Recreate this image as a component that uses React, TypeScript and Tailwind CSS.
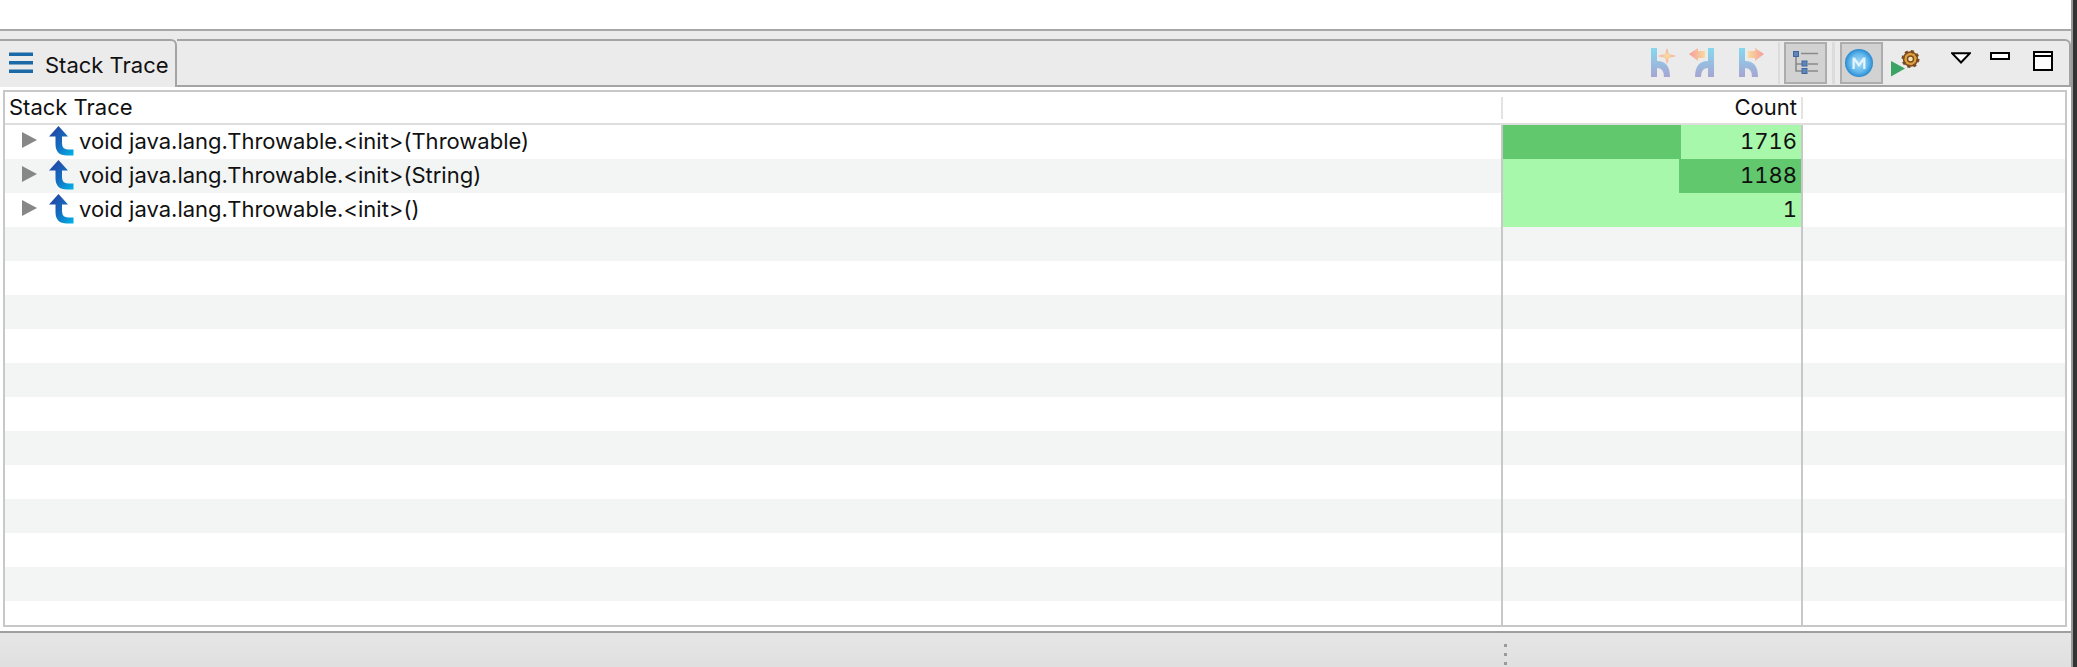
import React from "react";

type Row = {
  label: string;
  count: string;
  dark: "left" | "right" | "none";
};

const rows: Row[] = [
  { label: "void java.lang.Throwable.<init>(Throwable)", count: "1716", dark: "left" },
  { label: "void java.lang.Throwable.<init>(String)", count: "1188", dark: "right" },
  { label: "void java.lang.Throwable.<init>()", count: "1", dark: "none" },
];

const fontClass = "font-['Inter','Liberation_Sans',sans-serif]";

const SvgDefs = () => (
  <svg width="0" height="0" className="absolute">
    <defs>
      <linearGradient id="call" x1="0" y1="0" x2="1" y2="1">
        <stop offset="0" stopColor="#2b3a9c" />
        <stop offset="0.5" stopColor="#1668bd" />
        <stop offset="1" stopColor="#00b4e8" />
      </linearGradient>
      <linearGradient id="fork" x1="0" y1="0" x2="0" y2="1">
        <stop offset="0" stopColor="#86d8ee" />
        <stop offset="1" stopColor="#a7a5d2" />
      </linearGradient>
      <linearGradient id="arrowL" x1="0" y1="0" x2="1" y2="0">
        <stop offset="0" stopColor="#f59a9a" />
        <stop offset="1" stopColor="#f8dc9e" />
      </linearGradient>
      <linearGradient id="arrowR" x1="0" y1="0" x2="1" y2="0">
        <stop offset="0" stopColor="#f8dc9e" />
        <stop offset="1" stopColor="#f59a9a" />
      </linearGradient>
      <radialGradient id="star">
        <stop offset="0" stopColor="#fae2a0" />
        <stop offset="1" stopColor="#f59f9f" />
      </radialGradient>
      <radialGradient id="mball" cx="0.5" cy="0.5" r="0.5">
        <stop offset="0" stopColor="#a9dcf6" />
        <stop offset="0.65" stopColor="#62b8ec" />
        <stop offset="1" stopColor="#2a8ad0" />
      </radialGradient>
    </defs>
  </svg>
);

const HamburgerIcon = () => (
  <svg width="26" height="22" viewBox="0 0 26 22" className="mb-[3px] shrink-0">
    <rect x="0" y="0.5" width="24" height="3.5" fill="#1c69a8" />
    <rect x="0" y="9" width="24" height="3.5" fill="#1c69a8" />
    <rect x="0" y="17.5" width="24" height="3.5" fill="#1c69a8" />
  </svg>
);

const CallIcon = () => (
  <svg width="25" height="30" viewBox="0 0 25 30" className="shrink-0">
    <path
      d="M0 10.5 L9.5 0 L19 10.5 L13 10.5 L13 17 Q13 23.5 19 23.5 L24.5 23.5 L24.5 29.5 L18 29.5 Q6.5 29.5 6.5 18 L6.5 10.5 Z"
      fill="url(#call)"
    />
  </svg>
);

const Fork = ({ flip = false }: { flip?: boolean }) => (
  <path
    d="M1 0 H7 V13 Q20 13 20 29 H14 Q14 20 7 20 V29 H1 Z"
    fill="url(#fork)"
    transform={flip ? "translate(26 0) scale(-1 1)" : undefined}
  />
);

const ForkStarIcon = () => (
  <svg width="28" height="30" viewBox="0 0 28 30">
    <Fork />
    <path d="M17 0 L19 6 L26 8 L19 10 L17 16 L15 10 L8 8 L15 6 Z" fill="url(#star)" />
  </svg>
);

const ForkLeftIcon = () => (
  <svg width="27" height="30" viewBox="0 0 27 30">
    <Fork flip />
    <path d="M0 6 L9 0 V3 H16 V10 H9 V13 Z" fill="url(#arrowL)" />
  </svg>
);

const ForkRightIcon = () => (
  <svg width="27" height="30" viewBox="0 0 27 30">
    <Fork />
    <path d="M26 6 L17 0 V3 H10 V10 H17 V13 Z" fill="url(#arrowR)" />
  </svg>
);

const TreeIcon = () => (
  <svg width="26" height="24" viewBox="0 0 26 24">
    <path d="M3 6 V20 H10 M3 13 H10" stroke="#8a8a8a" strokeWidth="1.6" fill="none" />
    <path d="M8 2.5 H25 M15 13 H25 M15 20 H25" stroke="#8a8a8a" strokeWidth="1.6" />
    <rect x="0.5" y="0.5" width="5" height="5" fill="#5f86b8" stroke="#3f689e" />
    <rect x="9" y="10" width="5" height="5" fill="#5f86b8" stroke="#3f689e" />
    <rect x="9" y="17.5" width="5" height="5" fill="#5f86b8" stroke="#3f689e" />
  </svg>
);

const MavenIcon = () => (
  <svg width="28" height="28" viewBox="0 0 28 28" className="mr-[6px]">
    <circle cx="14" cy="14" r="14" fill="url(#mball)" />
    <path d="M7.5 20 V8.5 H10 L14 14.5 L18 8.5 H20.5 V20 H18.2 V12.5 L14 18 L9.8 12.5 V20 Z" fill="#e4f4fd" />
  </svg>
);

const RunGearIcon = () => (
  <svg width="29" height="27" viewBox="0 0 29 27">
    <path d="M0 11 L14 18.5 L0 26.5 Z" fill="#3ba464" />
    <g transform="translate(19.5 9)">
      <circle r="7" fill="#e0a13a" stroke="#7a4a22" strokeWidth="1.6" />
      <circle r="7.5" fill="none" stroke="#7a4a22" strokeWidth="3" strokeDasharray="3 2.9" />
      <circle r="3" fill="#f6e2b4" stroke="#7a4a22" strokeWidth="1.4" />
    </g>
  </svg>
);

const ViewMenuIcon = () => (
  <svg width="20" height="12" viewBox="0 0 20 12">
    <path d="M1 1.2 H19 L10 10.5 Z" fill="#ffffff" stroke="#000000" strokeWidth="2" strokeLinejoin="miter" />
  </svg>
);

const Lines = () => (
  <>
    <div className="w-[1496px] shrink-0" />
    <div className="w-[2px] shrink-0 bg-[#c8c8c8]" />
    <div className="w-[298px] shrink-0" />
    <div className="w-[2px] shrink-0 bg-[#c8c8c8]" />
  </>
);

export default function App() {
  return (
    <div className={`flex h-screen w-full overflow-hidden bg-white ${fontClass}`}>
      <div className="flex min-w-0 flex-1 flex-col">
        <div className="h-[29px] shrink-0 bg-white" />

        <div className="flex h-[604px] shrink-0 flex-col">
          <div className="h-[2px] shrink-0 bg-[#a8a8a8]" />
          <div className="flex flex-1 flex-col bg-white">
            <div className="h-[8px] shrink-0 bg-[#ebebeb]" />

            {/* tab bar */}
            <div className="flex h-[48px] shrink-0 items-stretch bg-[#ebebeb]">
              <div className="flex w-[177px] shrink-0 items-center gap-[10px] rounded-tr-[6px] border-t-2 border-r-2 border-[#a4a4a4] pl-[9px] text-[22px] text-[#111]">
                <HamburgerIcon />
                <span className="mt-[3px]">Stack Trace</span>
              </div>
              <div className="flex flex-1 items-center justify-end rounded-tr-[6px] border-t-2 border-r-2 border-b-2 border-[#a4a4a4]">
                <ForkStarIcon />
                <div className="ml-[11px]">
                  <ForkLeftIcon />
                </div>
                <div className="ml-[22px]">
                  <ForkRightIcon />
                </div>
                <div className="mr-[4px] ml-[13px] h-[42px] w-[2px] bg-[#dcdcdc]" />
                <div className="flex h-[42px] w-[43px] items-center justify-center border-2 border-[#adadad] bg-[#d2d2d2]">
                  <TreeIcon />
                </div>
                <div className="mx-[5px] h-[42px] w-[3px] bg-[#dcdcdc]" />
                <div className="flex h-[42px] w-[43px] items-center justify-center border-2 border-[#adadad] bg-[#d2d2d2]">
                  <MavenIcon />
                </div>
                <div className="ml-[8px]">
                  <RunGearIcon />
                </div>
                <div className="mb-[10px] ml-[31px]">
                  <ViewMenuIcon />
                </div>
                <div className="mb-[14px] ml-[19px] h-[8px] w-[20px] border-2 border-black bg-white" />
                <div className="mr-[16px] mb-[4px] ml-[23px] h-[20px] w-[20px] border-2 border-black bg-white">
                  <div className="mt-[2px] h-[2px] bg-black" />
                </div>
              </div>
            </div>

            {/* table */}
            <div className="flex flex-1 flex-col border-r-[4px] border-l-[3px] border-white bg-white pt-[3px] pb-[4px]">
              <div className="flex flex-1 flex-col overflow-hidden border-2 border-[#c8c8c8] bg-white">
                <div className="flex h-[33px] shrink-0 items-center border-b-2 border-[#dedede] text-[22px] text-[#111]">
                  <div className="w-[1496px] shrink-0 pl-[4px]">Stack Trace</div>
                  <div className="h-[22px] w-[2px] bg-[#e2e2e2]" />
                  <div className="w-[298px] shrink-0 pr-[4px] text-right">Count</div>
                  <div className="h-[22px] w-[2px] bg-[#e2e2e2]" />
                </div>

                {rows.map((row, index) => (
                  <div
                    key={row.label}
                    className={`flex h-[34px] shrink-0 text-[22px] text-[#111] ${index % 2 === 1 ? "bg-[#f3f5f4]" : "bg-white"}`}
                  >
                    <div className="flex w-[1496px] shrink-0 items-center pb-[2px] pl-[17px]">
                      <span className="mr-[12px] mb-[2px] h-0 w-0 border-y-[8px] border-l-[15px] border-y-transparent border-l-[#878787]" />
                      <span className="mr-[5px]">
                        <CallIcon />
                      </span>
                      <span>{row.label}</span>
                    </div>
                    <div className="w-[2px] shrink-0 bg-[#c8c8c8]" />
                    {row.dark === "left" && (
                      <div className="flex w-[298px] shrink-0">
                        <div className="w-[178px] bg-[#62c86e]" />
                        <div className="flex-1 bg-[#a8f8ac] pr-[4px] text-right leading-[32px] tabular-nums">{row.count}</div>
                      </div>
                    )}
                    {row.dark === "right" && (
                      <div className="flex w-[298px] shrink-0">
                        <div className="w-[176px] bg-[#a8f8ac]" />
                        <div className="flex-1 bg-[#62c86e] pr-[4px] text-right leading-[32px] tabular-nums">{row.count}</div>
                      </div>
                    )}
                    {row.dark === "none" && (
                      <div className="w-[298px] shrink-0 bg-[#a8f8ac] pr-[4px] text-right leading-[32px] tabular-nums">{row.count}</div>
                    )}
                    <div className="w-[2px] shrink-0 bg-[#c8c8c8]" />
                  </div>
                ))}

                {Array.from({ length: 11 }).map((_, i) => (
                  <div key={i} className={`flex h-[34px] shrink-0 ${i % 2 === 0 ? "bg-[#f3f5f4]" : "bg-white"}`}>
                    <Lines />
                  </div>
                ))}
                <div className="flex flex-1 bg-white">
                  <Lines />
                </div>
              </div>
            </div>
            <div className="h-[2px] shrink-0 bg-[#a0a0a0]" />
          </div>
        </div>

        {/* status bar */}
        <div className="flex flex-1 flex-col items-start bg-gradient-to-b from-[#e6e6e6] to-[#e0e0e0] pt-[11px] pl-[1504px]">
          <div className="flex flex-col gap-[6px]">
            <div className="h-[3px] w-[3px] bg-[#9a9a9a]" />
            <div className="h-[3px] w-[3px] bg-[#9a9a9a]" />
            <div className="h-[3px] w-[3px] bg-[#9a9a9a]" />
          </div>
        </div>
      </div>
      <div className="w-[2px] shrink-0 bg-[#9a9a9a]" />
      <div className="w-[4px] shrink-0 bg-[#333333]" />
      <SvgDefs />
    </div>
  );
}
